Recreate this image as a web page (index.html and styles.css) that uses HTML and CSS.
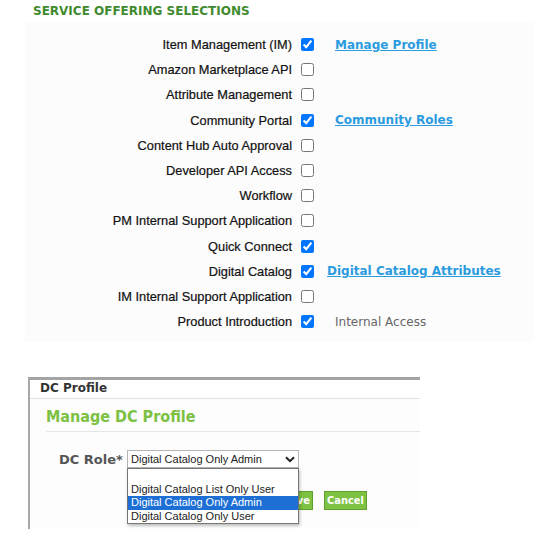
FILE: index.html
```html
<!DOCTYPE html>
<html>
<head>
<meta charset="utf-8">
<link rel="stylesheet" href="styles.css">
</head>
<body>
<h2 class="title">SERVICE OFFERING SELECTIONS</h2>
<div class="offerings">
  <span class="lbl">Item Management (IM)</span><input type="checkbox" checked><a class="extra link" href="#">Manage Profile</a>
  <span class="lbl">Amazon Marketplace API</span><input type="checkbox"><span></span>
  <span class="lbl">Attribute Management</span><input type="checkbox"><span></span>
  <span class="lbl">Community Portal</span><input type="checkbox" checked><a class="extra link" href="#">Community Roles</a>
  <span class="lbl">Content Hub Auto Approval</span><input type="checkbox"><span></span>
  <span class="lbl">Developer API Access</span><input type="checkbox"><span></span>
  <span class="lbl">Workflow</span><input type="checkbox"><span></span>
  <span class="lbl">PM Internal Support Application</span><input type="checkbox"><span></span>
  <span class="lbl">Quick Connect</span><input type="checkbox" checked><span></span>
  <span class="lbl">Digital Catalog</span><input type="checkbox" checked><a class="extra link tight" href="#">Digital Catalog Attributes</a>
  <span class="lbl">IM Internal Support Application</span><input type="checkbox"><span></span>
  <span class="lbl">Product Introduction</span><input type="checkbox" checked><span class="extra note">Internal Access</span>
</div>

<div class="dc-panel">
  <div class="dc-head">DC Profile</div>
  <div class="dc-body">
    <h3 class="dc-title">Manage DC Profile</h3>
    <div class="dc-row">
      <span class="dc-label">DC Role*</span>
      <div class="select-wrap">
        <div class="select">
          <span>Digital Catalog Only Admin</span>
          <svg class="chev" width="10" height="7" viewBox="0 0 10 7"><path d="M1 1.2 L5 5.2 L9 1.2" fill="none" stroke="#222" stroke-width="2"/></svg>
        </div>
        <ul class="options">
          <li>&nbsp;</li>
          <li>Digital Catalog List Only User</li>
          <li class="sel">Digital Catalog Only Admin</li>
          <li>Digital Catalog Only User</li>
        </ul>
      </div>
    </div>
    <div class="btn-row">
      <button class="btn">Save</button>
      <button class="btn">Cancel</button>
    </div>
  </div>
</div>
</body>
</html>
```
FILE: styles.css
```css
html, body { margin: 0; padding: 0; background: #fff; }
body { width: 540px; height: 552px; overflow: hidden; font-family: "Liberation Sans", Arial, sans-serif; }

.title {
  margin: 0;
  padding: 4px 0 0 33px;
  height: 18px;
  font-family: "DejaVu Sans", Verdana, sans-serif;
  font-weight: bold;
  font-size: 12px;
  line-height: 14px;
  color: #3f8a2f;
}

.offerings {
  margin: 0 0 0 25px;
  width: 508px;
  box-sizing: border-box;
  padding: 10px 0 8px 0;
  background: #fcfcfc;
  display: grid;
  grid-template-columns: 267px 13px 1fr;
  column-gap: 9px;
  grid-auto-rows: 25.2px;
  align-items: center;
}
.offerings input[type=checkbox] { margin: 0; width: 13px; height: 13px; }
.lbl { text-align: right; font-size: 12.8px; color: #111; -webkit-text-stroke: 0.2px #111; }
.extra { padding-left: 12px; font-family: "DejaVu Sans", Verdana, sans-serif; font-size: 12px; }
.extra.tight { padding-left: 4px; }
.link { color: #2b9be0; font-weight: bold; text-decoration: underline; }
.note { color: #666; }

.dc-panel {
  margin: 35px 0 0 28px;
  width: 392px;
  height: 152px;
  border-top: 3px solid #a4a4a4;
  border-left: 2px solid #a8a8a8;
  box-sizing: border-box;
  font-family: "DejaVu Sans", Verdana, sans-serif;
}
.dc-head {
  height: 18px;
  line-height: 16px;
  padding-left: 10px;
  font-size: 12px;
  font-weight: bold;
  color: #333;
  border-bottom: 1px solid #e2e2e2;
}
.dc-body { background: #fdfdfd; padding: 8px 0 0 16px; height: 120px; }
.dc-title {
  margin: 0;
  font-family: "DejaVu Sans Condensed", "DejaVu Sans", sans-serif;
  font-size: 16px;
  line-height: 20px;
  color: #7cc142;
  padding-bottom: 4px;
  border-bottom: 1px solid #e6e6e6;
}
.dc-row { display: flex; align-items: center; margin-top: 18px; margin-left: 13px; }
.dc-label { font-size: 13px; font-weight: bold; color: #555; width: 68px; }
.select-wrap { position: relative; z-index: 2; }
.select {
  width: 172px; height: 18px; box-sizing: border-box;
  border: 1px solid #b5b5b5; background: #fff;
  display: flex; align-items: center; justify-content: space-between;
  padding: 0 3px 0 3px;
  font-family: "Liberation Sans", Arial, sans-serif; font-size: 11px; color: #222;
}
.options {
  position: absolute; left: 0; top: 18px;
  margin: 0; padding: 0; list-style: none;
  width: 172px; box-sizing: border-box;
  border: 1px solid #767676; background: #fff;
  box-shadow: 1px 2px 3px rgba(0,0,0,0.25);
  font-family: "Liberation Sans", Arial, sans-serif; font-size: 11px; color: #222;
}
.options li { height: 13.5px; line-height: 13.5px; padding-left: 3px; }
.options li.sel { background: #1d6fd6; color: #fff; }
.btn-row { display: flex; gap: 11px; margin: 23px 0 0 234px; }
.btn {
  height: 19px; padding: 0 2px; border: 1px solid #5f9f2e;
  background: #7dc242; color: #fff; font-weight: bold;
  font-family: "DejaVu Sans Condensed", "DejaVu Sans", sans-serif; font-size: 11px;
}
```
